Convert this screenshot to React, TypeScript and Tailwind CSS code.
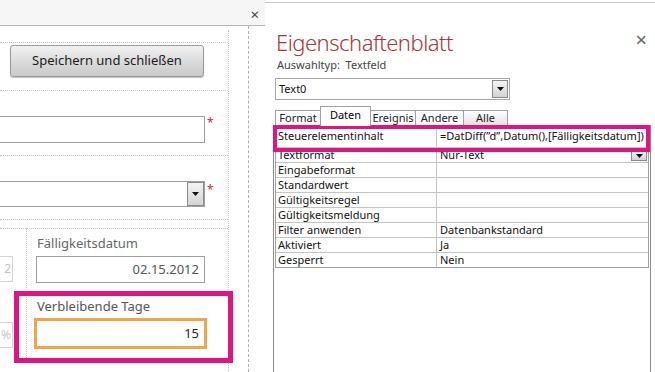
import React from 'react';

const font = { fontFamily: '"Noto Sans", "Open Sans", sans-serif' };

function DropBtn({ className = '' }: { className?: string }) {
  return (
    <div className={`flex items-center justify-center border border-[#8a8a8a] bg-gradient-to-b from-[#f4f4f4] to-[#d4d4d4] ${className}`}>
      <svg width="7" height="4" viewBox="0 0 7 4">
        <path d="M0 0H7L3.5 4Z" fill="#111" />
      </svg>
    </div>
  );
}

const rows: [string, string][] = [
  ['Steuerelementinhalt', '=DatDiff(”d”,Datum(),[Fälligkeitsdatum])'],
  ['Textformat', 'Nur-Text'],
  ['Eingabeformat', ''],
  ['Standardwert', ''],
  ['Gültigkeitsregel', ''],
  ['Gültigkeitsmeldung', ''],
  ['Filter anwenden', 'Datenbankstandard'],
  ['Aktiviert', 'Ja'],
  ['Gesperrt', 'Nein'],
];

const tabs = ['Format', 'Daten', 'Ereignis', 'Andere', 'Alle'];
const tabW = ['w-[46px]', 'w-[51px]', 'w-[46px]', 'w-[49px]', 'w-[45px]'];

export default function App() {
  return (
    <div className="w-[655px] h-[372px] bg-white overflow-hidden relative flex" style={font}>
      {/* top strip */}
      <div className="absolute left-0 top-0 w-full h-[3px] border-b border-[#c8c8c8]" />

      {/* form designer */}
      <div className="w-[265px] shrink-0 relative flex flex-col">
        <div className="h-[26px] bg-[#f6f6f6] border-b border-[#b4b4b4] flex justify-end items-center pr-[6px] pt-[3px]">
          <span className="text-[15px] leading-none text-[#444]">×</span>
        </div>

        {/* guides */}
        <div className="absolute left-[248px] top-[26px] bottom-0 border-l border-dashed border-[#b0b0b0]" />
        <div className="absolute left-[228px] top-[30px] bottom-0 border-l border-dotted border-[#c4c4c4]" />
        <div className="absolute left-0 top-[42px] w-[228px] border-t border-dotted border-[#c4c4c4]" />
        <div className="absolute left-0 top-[90px] w-[228px] border-t border-dotted border-[#c4c4c4]" />
        <div className="absolute left-0 top-[155px] w-[228px] border-t border-dotted border-[#c4c4c4]" />
        <div className="absolute left-0 top-[219px] w-[228px] border-t border-dotted border-[#c4c4c4]" />
        <div className="absolute left-0 top-[228px] w-[228px] border-t border-dotted border-[#c4c4c4]" />
        <div className="absolute left-[26px] top-[228px] h-[130px] border-l border-dotted border-[#c4c4c4]" />

        <div className="ml-[10px] mt-[19px] w-[194px] h-[32px] rounded-[3px] border border-[#9a9a9a] bg-gradient-to-b from-[#f2f2f2] via-[#dcdcdc] to-[#c9c9c9] flex items-center justify-center text-[13px] text-[#1a1a1a] shadow-[0_1px_1px_rgba(0,0,0,0.25)]">
          Speichern und schließen
        </div>

        <div className="mt-[39px] flex items-start">
          <div className="w-[205px] h-[27px] border border-l-0 border-[#a0a0a0] bg-white" />
          <span className="ml-[2px] text-[12px] leading-[14px] text-[#d21f3c]">*</span>
        </div>

        <div className="mt-[38px] flex items-start">
          <div className="w-[205px] h-[26px] border border-l-0 border-[#a0a0a0] bg-white flex justify-end">
            <DropBtn className="w-[17px] h-[24px]" />
          </div>
          <span className="ml-[2px] mt-[2px] text-[12px] leading-[14px] text-[#d21f3c]">*</span>
        </div>

        <div className="mt-[27px] ml-[37px] text-[13px] leading-[18px] text-[#666]">Fälligkeitsdatum</div>
        <div className="mt-[4px] flex items-start">
          <div className="w-[13px] h-[26px] border border-l-0 border-[#d4d4d4] text-[12px] leading-[24px] text-[#c0c0c0] text-right pr-[1px]">2</div>
          <div className="ml-[23px] w-[169px] h-[27px] border border-[#a0a0a0] bg-white text-[13px] leading-[25px] text-[#555] text-right pr-[5px]">
            02.15.2012
          </div>
        </div>

        <div className="mt-[8px] ml-[14px] w-[219px] h-[72px] border-[5px] border-[#e2147f] relative">
          <div className="ml-[18px] mt-[1px] text-[13px] leading-[18px] text-[#555]">Verbleibende Tage</div>
          <div className="ml-[15px] mt-[3px] w-[173px] h-[31px] border-[3px] border-[#f2a544] bg-white text-[13px] leading-[25px] text-[#222] text-right pr-[5px]">
            15
          </div>
        </div>
        <div className="absolute left-0 top-[322px] w-[13px] h-[26px] border border-l-0 border-[#d4d4d4] text-[12px] leading-[24px] text-[#c8c8c8] text-right pr-[1px]">%</div>
      </div>

      {/* property sheet */}
      <div className="flex-1 min-w-0 relative flex flex-col pl-[8px] pr-[4px]">
        <div className="flex items-start justify-between mt-[27px]">
          <div className="ml-[3px] text-[22px] leading-[30px] text-[#a6373b] tracking-[-0.5px]" style={{ fontWeight: 300 }}>
            Eigenschaftenblatt
          </div>
          <span className="mt-[3px] mr-[4px] text-[20px] leading-none text-[#666]">×</span>
        </div>
        <div className="ml-[4px] mt-[1px] text-[11px] leading-[14px] text-[#444]">Auswahltyp:&nbsp; Textfeld</div>

        <div className="ml-[2px] mt-[6px] w-[235px] h-[22px] border border-[#a8a8a8] flex items-center justify-between pl-[3px] pr-[1px]">
          <span className="text-[11px] text-[#111]">Text0</span>
          <DropBtn className="w-[16px] h-[18px]" />
        </div>

        <div className="ml-[2px] mt-[6px] flex items-end h-[20px]">
          {tabs.map((t, i) => (
            <div
              key={t}
              className={`${tabW[i]} shrink-0 text-center text-[11px] border border-[#a0a0a0] -mr-px ${
                i === 1
                  ? 'h-[20px] leading-[16px] bg-white border-b-0 relative z-10'
                  : i === 4
                  ? 'h-[16px] leading-[14px] bg-gradient-to-b from-white to-[#e2e2e2] text-[#222]'
                  : 'h-[16px] leading-[14px] bg-white text-[#222]'
              }`}
            >
              {t}
            </div>
          ))}
        </div>

        <div className="flex-1 border border-[#8c8c8c] border-b-0 -mt-px pt-[2px] px-[1px]">
          <div className="border border-[#a0a0a0]">
            {rows.map(([k, v], i) => (
              <div
                key={k}
                className={`flex ${i === 0 ? 'h-[18px] items-center' : 'h-[15px] border-t border-[#c4c4c4]'} text-[11px] leading-[14px] text-[#111]`}
              >
                <div className="w-[161px] shrink-0 pl-[2px] border-r border-[#c4c4c4] h-full whitespace-nowrap overflow-hidden">{k}</div>
                <div className="flex-1 min-w-0 pl-[3px] h-full whitespace-nowrap overflow-hidden flex justify-between">
                  <span>{v}</span>
                  {i === 1 && <DropBtn className="w-[16px] h-[11px] mt-[2px] mr-[1px] shrink-0" />}
                </div>
              </div>
            ))}
          </div>
        </div>

        {/* highlight */}
        <div className="absolute left-[8px] right-[5px] top-[125px] h-[27px] border-[4px] border-[#e2147f] pointer-events-none" />
      </div>
    </div>
  );
}
